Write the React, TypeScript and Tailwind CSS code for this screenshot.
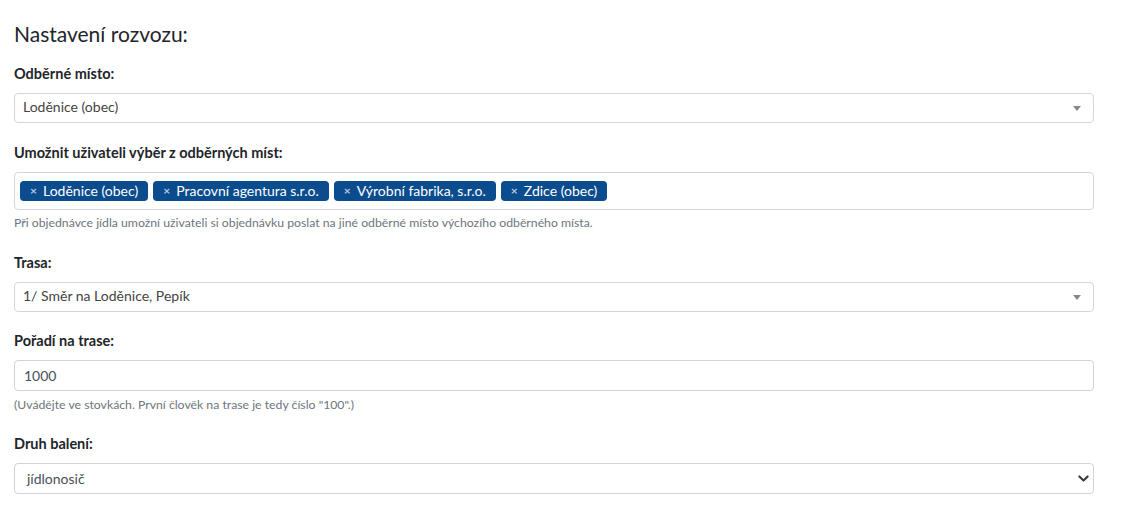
const tags = ['Loděnice (obec)', 'Pracovní agentura s.r.o.', 'Výrobní fabrika, s.r.o.', 'Zdice (obec)'];

function Caret() {
  return (
    <span className="ml-auto mr-[12px] h-0 w-0 border-x-[4px] border-t-[5px] border-x-transparent border-t-[#888]" />
  );
}

function FakeSelect({ value }: { value: string }) {
  return (
    <div className="flex h-[30px] w-full items-center rounded-[4px] border border-[#d2d6de] bg-white pl-[8px] text-[14px] text-[#444]">
      <span className="pb-[3px]">{value}</span>
      <Caret />
    </div>
  );
}

function Label({ children }: { children: React.ReactNode }) {
  return <label className="mb-[9px] block text-[14.5px] leading-[20px] font-bold text-[#212529]">{children}</label>;
}

function Help({ children, top }: { children: React.ReactNode; top: string }) {
  return <p className={`${top} text-[12.25px] leading-[18px] text-[#6c757d]`}>{children}</p>;
}

export default function App() {
  return (
    <div className="min-h-screen bg-white font-['Lato',sans-serif] text-[#212529]">
      <div className="w-[1094px] pl-[14px] pt-[18px]">
        <h4 className="mb-[14px] text-[21px] font-normal leading-[32px] text-[#212529]">Nastavení rozvozu:</h4>

        <div className="mb-[20px]">
          <Label>Odběrné místo:</Label>
          <FakeSelect value="Loděnice (obec)" />
        </div>

        <div className="mb-[21px]">
          <Label>Umožnit uživateli výběr z odběrných míst:</Label>
          <div className="flex h-[38px] w-full items-center gap-[5px] rounded-[4px] border border-[#d2d6de] bg-white px-[5px]">
            {tags.map((t) => (
              <span
                key={t}
                className="flex h-[20px] items-center rounded-[4px] bg-[#0a4c8d] px-[10px] text-[14px] leading-none text-white"
              >
                <span className="mr-[6px] text-[12px] font-bold text-[#b8c8dc]">×</span>
                {t}
              </span>
            ))}
          </div>
          <Help top="mt-[4px]">
            Při objednávce jídla umožní uživateli si objednávku poslat na jiné odběrné místo výchozího odběrného místa.
          </Help>
        </div>

        <div className="mb-[19px]">
          <Label>Trasa:</Label>
          <FakeSelect value="1/ Směr na Loděnice, Pepík" />
        </div>

        <div className="mb-[20px]">
          <Label>Pořadí na trase:</Label>
          <input
            defaultValue="1000"
            className="block h-[31px] w-full rounded-[4px] border border-[#ced4da] bg-white px-[9px] text-[14px] text-[#495057] outline-none"
          />
          <Help top="mt-[5px]">(Uvádějte ve stovkách. První člověk na trase je tedy číslo "100".)</Help>
        </div>

        <div>
          <Label>Druh balení:</Label>
          <div className="flex h-[31px] w-full items-center rounded-[4px] border border-[#ced4da] bg-white pl-[12px] text-[14px] text-[#495057]">
            <span>jídlonosič</span>
            <svg className="ml-auto mr-[4px]" width="11" height="11" viewBox="0 0 16 16">
              <path d="M2 5l6 6 6-6" fill="none" stroke="#343a40" strokeWidth="3" strokeLinecap="round" strokeLinejoin="round" />
            </svg>
          </div>
        </div>
      </div>
    </div>
  );
}
